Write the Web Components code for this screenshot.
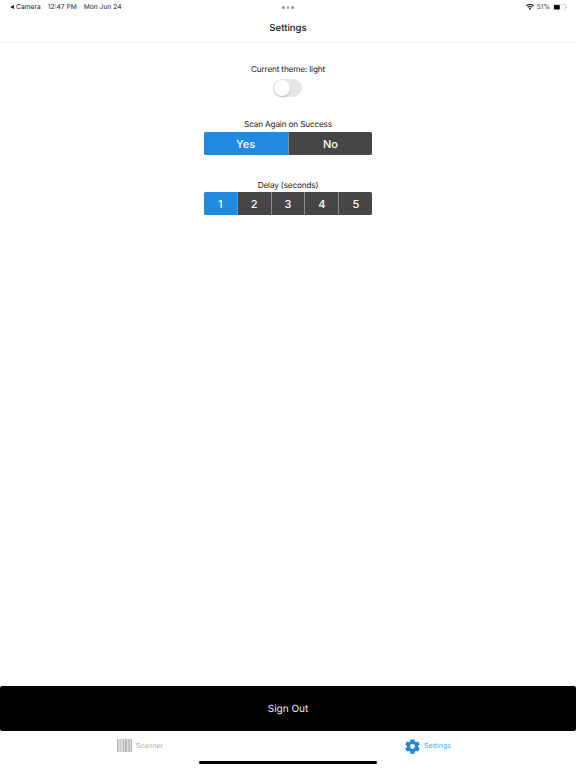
<!DOCTYPE html>
<html>
<head>
<meta charset="utf-8">
<title>Settings</title>
<style>
  html, body { margin: 0; height: 100%; background: #fff; }
  body { font-family: Inter, "Liberation Sans", sans-serif; color: #000; text-rendering: geometricPrecision; }
</style>
</head>
<body>
<app-shell>
  <status-bar slot="status"></status-bar>
  <nav-header slot="header">Settings</nav-header>
  <setting-group label="Current theme: light" gap="4"><theme-switch></theme-switch></setting-group>
  <setting-group label="Scan Again on Success" top="22" gap="2">
    <seg-control options="Yes,No" selected="Yes"></seg-control>
  </setting-group>
  <setting-group label="Delay (seconds)" top="24.5" gap="1.5">
    <seg-control options="1,2,3,4,5" selected="1"></seg-control>
  </setting-group>
  <sign-out slot="footer">Sign Out</sign-out>
  <tab-bar slot="footer"></tab-bar>
</app-shell>

<script>
// Contenedor principal de la pantalla
class AppShell extends HTMLElement {
  constructor() {
    super();
    this.attachShadow({ mode: "open" });
    this.shadowRoot.innerHTML = `
      <style>
        :host { display: flex; flex-direction: column; width: 576px; height: 768px; overflow: hidden; }
        main { flex: 1; display: flex; flex-direction: column; align-items: center; padding-top: 21px; }
      </style>
      <slot name="status"></slot>
      <slot name="header"></slot>
      <main><slot></slot></main>
      <slot name="footer"></slot>
    `;
  }
}

class StatusBar extends HTMLElement {
  constructor() {
    super();
    this.attachShadow({ mode: "open" });
    this.shadowRoot.innerHTML = `
      <style>
        :host { display: flex; align-items: center; justify-content: space-between; height: 14px; padding: 0 9px 0 10px; font-size: 6.7px; color: #222; position: relative; }
        .side { display: flex; align-items: center; }
        .back { width: 0; height: 0; border: 2.2px solid transparent; border-right: 4px solid #222; border-left: 0; margin-right: 2px; }
        .time { margin-left: 7px; }
        .date { margin-left: 7px; }
        .dots { position: absolute; left: 282px; top: 6px; display: flex; gap: 2px; }
        .dots i { width: 2.6px; height: 2.6px; border-radius: 50%; background: #9a9a9a; }
        .pct { margin: 0 3px; color: #444; }
      </style>
      <div class="side">
        <span class="back"></span><span>Camera</span>
        <span class="time">12:47 PM</span><span class="date">Mon Jun 24</span>
      </div>
      <div class="dots"><i></i><i></i><i></i></div>
      <div class="side">
        <svg width="8" height="6" viewBox="0 0 16 12"><path fill="#111" d="M8 12 5.6 9.2a3.6 3.6 0 0 1 4.8 0zM4.3 7.7 2.8 6a8 8 0 0 1 10.4 0l-1.5 1.7a5.8 5.8 0 0 0-7.4 0zM1.6 4.6 0 2.9a12 12 0 0 1 16 0l-1.6 1.7a9.7 9.7 0 0 0-12.8 0z"/></svg>
        <span class="pct">51%</span>
        <svg width="14" height="6.5" viewBox="0 0 28 13"><rect x=".5" y=".5" width="24" height="12" rx="3.2" fill="none" stroke="#aaa"/><rect x="2" y="2" width="11.5" height="9" rx="1.6" fill="#000"/><path d="M26 4.5c1 .3 1.7 1 1.7 2s-.7 1.7-1.7 2z" fill="#aaa"/></svg>
      </div>
    `;
  }
}

class NavHeader extends HTMLElement {
  constructor() {
    super();
    this.attachShadow({ mode: "open" });
    this.shadowRoot.innerHTML = `
      <style>
        :host { display: flex; align-items: center; justify-content: center; height: 28px; border-bottom: 1px solid #f4f4f4; font-size: 9.6px; font-weight: 500; color: #111; }
      </style>
      <slot></slot>
    `;
  }
}

class SettingGroup extends HTMLElement {
  connectedCallback() {
    if (this.shadowRoot) return;
    this.attachShadow({ mode: "open" });
    const label = this.getAttribute("label");
    const top = this.getAttribute("top") || 0;
    const gap = this.getAttribute("gap") || 3;
    this.shadowRoot.innerHTML = `
      <style>
        :host { display: flex; flex-direction: column; align-items: center; margin-top: ${top}px; }
        .label { font-size: 8.2px; letter-spacing: -0.15px; line-height: 11px; color: #222; margin-bottom: ${gap}px; }
      </style>
      <div class="label">${label}</div>
      <slot></slot>
    `;
  }
}

class ThemeSwitch extends HTMLElement {
  constructor() {
    super();
    this.attachShadow({ mode: "open" });
    this.shadowRoot.innerHTML = `
      <style>
        :host { display: block; width: 29px; height: 18px; border-radius: 9px; background: #e6e6e6; position: relative; }
        .knob { position: absolute; left: 1px; top: 1px; width: 16px; height: 16px; border-radius: 50%; background: #fff; box-shadow: 0 1px 2px rgba(0,0,0,.22); }
      </style>
      <div class="knob"></div>
    `;
  }
}

class SegControl extends HTMLElement {
  connectedCallback() {
    if (this.shadowRoot) return;
    this.attachShadow({ mode: "open" });
    const options = this.getAttribute("options").split(",");
    const selected = this.getAttribute("selected");
    const items = options.map(o => `<div class="seg${o === selected ? " on" : ""}">${o}</div>`).join("");
    this.shadowRoot.innerHTML = `
      <style>
        :host { display: flex; width: 168.5px; height: 23px; border-radius: 2px; overflow: hidden; background: #8a8a8a; gap: 1px; }
        .seg { flex: 1; display: flex; align-items: center; justify-content: center; background: #464646; color: #fff; font-size: 11px; font-weight: 500; }
        .seg.on { background: #2089e0; }
      </style>
      ${items}
    `;
  }
}

class SignOut extends HTMLElement {
  constructor() {
    super();
    this.attachShadow({ mode: "open" });
    this.shadowRoot.innerHTML = `
      <style>
        :host { display: flex; align-items: center; justify-content: center; height: 44px; padding-top: 1px; background: #000; color: #f0f0f0; font-size: 10px; border-radius: 2px; }
      </style>
      <slot></slot>
    `;
  }
}

class TabBar extends HTMLElement {
  constructor() {
    super();
    this.attachShadow({ mode: "open" });
    const bars = [1,1.5,1,2,1,1,2,1,1.5,1,1];
    let x = 0;
    const rects = bars.map((w, i) => {
      const r = `<rect x="${x}" y="0" width="${w}" height="13" fill="${i % 2 ? "#dcdcdc" : "#b4b4b4"}"/>`;
      x += w;
      return r;
    }).join("");
    this.shadowRoot.innerHTML = `
      <style>
        :host { display: flex; height: 37px; position: relative; }
        .tab { flex: 1; display: flex; justify-content: center; align-items: flex-start; gap: 4px; padding: 8px 8px 0 0; font-size: 7px; line-height: 14px; color: #adadad; }
        .tab.on { color: #4aa3ea; }
        svg { display: block; }
        .home { position: absolute; left: 199px; bottom: 4px; width: 178px; height: 3px; border-radius: 2px; background: #000; }
      </style>
      <div class="tab"><svg width="15" height="13" viewBox="0 0 ${x} 13" preserveAspectRatio="none">${rects}</svg><span>Scanner</span></div>
      <div class="tab on">
        <svg width="15" height="15" viewBox="2 2 20 20"><path fill="#1f86d8" d="M19.4 13a7.5 7.5 0 0 0 0-2l2.3-1.8-2.3-3.9-2.7 1.1a7.6 7.6 0 0 0-1.7-1L14.6 2.5H9.4L9 5.4a7.6 7.6 0 0 0-1.7 1L4.6 5.3 2.3 9.2 4.6 11a7.5 7.5 0 0 0 0 2l-2.3 1.8 2.3 3.9 2.7-1.1a7.6 7.6 0 0 0 1.7 1l.4 2.9h5.2l.4-2.9a7.6 7.6 0 0 0 1.7-1l2.7 1.1 2.3-3.9zM12 15.2a3.2 3.2 0 1 1 0-6.4 3.2 3.2 0 0 1 0 6.4z"/></svg>
        <span>Settings</span>
      </div>
      <div class="home"></div>
    `;
  }
}

customElements.define("app-shell", AppShell);
customElements.define("status-bar", StatusBar);
customElements.define("nav-header", NavHeader);
customElements.define("setting-group", SettingGroup);
customElements.define("theme-switch", ThemeSwitch);
customElements.define("seg-control", SegControl);
customElements.define("sign-out", SignOut);
customElements.define("tab-bar", TabBar);
</script>
</body>
</html>
